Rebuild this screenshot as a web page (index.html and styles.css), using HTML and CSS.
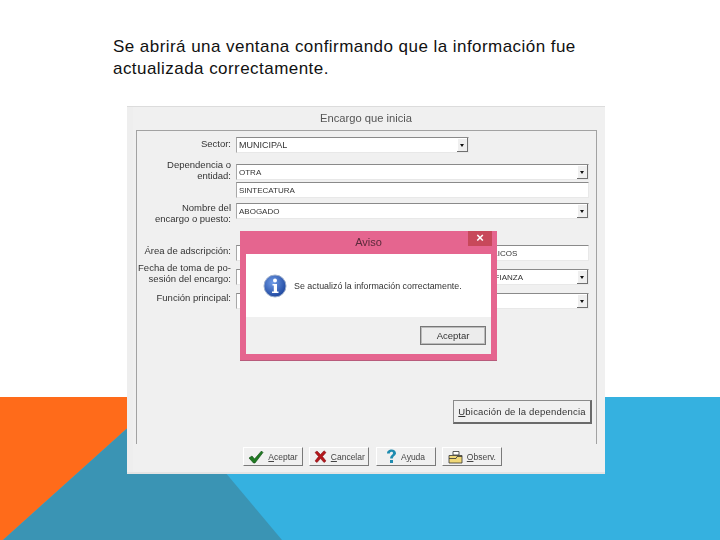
FILE: index.html
```html
<!DOCTYPE html>
<html lang="es">
<head>
<meta charset="utf-8">
<title>Encargo que inicia</title>
<link rel="stylesheet" href="styles.css">
</head>
<body>
<svg class="backdrop" viewBox="0 0 720 143" width="720" height="143" aria-hidden="true">
  <rect width="720" height="143" fill="#35b1e0"/>
  <polygon points="0,0 162,0 3,143 0,143" fill="#ff6b1a"/>
  <polygon points="162,0 282,143 3,143" fill="#3a94b4"/>
</svg>
<p class="intro">Se abrirá una ventana confirmando que la información fue actualizada correctamente.</p>
<div class="window">
  <div class="window-title">Encargo que inicia</div>
  <div class="panel">
    <div class="row row-sector">
      <div class="label label-single">Sector:</div>
      <div class="field field-short"><span class="value value-lg">MUNICIPAL</span><span class="arrow"></span></div>
    </div>
    <div class="row row-dep">
      <div class="label">Dependencia o<br>entidad:</div>
      <div class="stack">
        <div class="field field-thin"><span class="value">OTRA</span><span class="arrow"></span></div>
        <div class="field field-plain"><span class="value">SINTECATURA</span></div>
      </div>
    </div>
    <div class="row row-name">
      <div class="label label-name">Nombre del<br>encargo o puesto:</div>
      <div class="field"><span class="value">ABOGADO</span><span class="arrow"></span></div>
    </div>
    <div class="row row-area">
      <div class="label label-single label-area">Área de adscripción:</div>
      <div class="field field-plain"><span class="value value-area">DIRECCIÓN DE ASUNTOS PÚBLICOS</span></div>
    </div>
    <div class="row row-date">
      <div class="label label-date">Fecha de toma de po-<br>sesión del encargo:</div>
      <div class="field"><span class="value value-date">PERSONAL DE CONFIANZA</span><span class="arrow"></span></div>
    </div>
    <div class="row row-func">
      <div class="label label-single label-func">Función principal:</div>
      <div class="field"><span class="value"></span><span class="arrow"></span></div>
    </div>
    <div class="location-wrap"><button class="btn btn-location"><u>U</u>bicación de la dependencia</button></div>
  </div>
  <div class="actions">
    <button class="btn btn-action">
      <svg width="16" height="14" viewBox="0 0 16 14"><path d="M1 8 L4 6 L6.5 9 L13.5 1 L15 2.5 L7 13 L5.5 13 Z" fill="#1f7a22" stroke="#0f4a12" stroke-width=".6"/></svg>
      <span><u>A</u>ceptar</span>
    </button>
    <button class="btn btn-action">
      <svg width="13" height="13" viewBox="0 0 13 13"><path d="M1 2.5 L3 1 L6.5 4.5 L10 .8 L12 2.5 L8.5 6.5 L12 11 L10 12.5 L6.5 8.5 L3 12.5 L1 11 L4.5 6.5 Z" fill="#b3171c" stroke="#7c0d10" stroke-width=".5"/></svg>
      <span><u>C</u>ancelar</span>
    </button>
    <button class="btn btn-action">
      <svg width="11" height="15" viewBox="0 0 11 15"><path d="M1 4.5 C1 1.5 3.5 .5 5.5 .5 C8 .5 10 2 10 4.2 C10 6.3 7 7 6.8 9.5 L4.2 9.5 C4 6.5 7 6 7 4.3 C7 3 6.3 2.7 5.5 2.7 C4.5 2.7 3.8 3.4 3.8 4.5 Z" fill="#1f8cb0"/><rect x="4" y="11" width="3" height="3" fill="#1f8cb0"/></svg>
      <span>A<u>y</u>uda</span>
    </button>
    <button class="btn btn-action">
      <svg width="15" height="14" viewBox="0 0 15 14"><path d="M5 1.5 H11 V5 H5 Z" fill="#fff" stroke="#333" stroke-width=".8"/><path d="M1 5.5 H14 V13 H1 Z" fill="#f0d878" stroke="#333" stroke-width=".8"/><path d="M1 8.5 H8 L9 6.5 H14" fill="none" stroke="#333" stroke-width=".8"/></svg>
      <span><u>O</u>bserv.</span>
    </button>
  </div>
  <div class="dialog">
    <div class="dialog-title">Aviso<span class="dialog-close">×</span></div>
    <div class="dialog-body">
      <div class="dialog-message">
        <svg width="24" height="24" viewBox="0 0 24 24">
          <defs><radialGradient id="info" cx=".4" cy=".35" r=".75"><stop offset="0" stop-color="#6f9be6"/><stop offset="1" stop-color="#143c96"/></radialGradient></defs>
          <circle cx="12" cy="12" r="11" fill="url(#info)" stroke="#9fb0cc" stroke-width="1"/>
          <circle cx="12" cy="6.5" r="2" fill="#fff"/>
          <path d="M9.5 10 H14 V17.5 H15.5 V19 H9 V17.5 H10.8 V11.5 H9.5 Z" fill="#fff"/>
        </svg>
        <span>Se actualizó la información correctamente.</span>
      </div>
      <div class="dialog-footer"><button class="btn btn-ok">Aceptar</button></div>
    </div>
  </div>
</div>
</body>
</html>
```
FILE: styles.css
```css
html, body { margin: 0; padding: 0; }
body {
  position: relative;
  width: 720px;
  height: 540px;
  overflow: hidden;
  background: #fff;
  font-family: "Liberation Sans", Arial, sans-serif;
}
.backdrop { position: absolute; left: 0; top: 397px; display: block; }
.intro {
  position: relative;
  margin: 0 0 0 113px;
  padding-top: 36px;
  width: 480px;
  height: 106px;
  box-sizing: border-box;
  font-size: 17px;
  letter-spacing: .45px;
  line-height: 22px;
  color: #111;
}
.window {
  position: relative;
  box-sizing: border-box;
  margin-left: 127px;
  width: 478px;
  height: 368px;
  background: #f0f0f0;
  border-top: 1px solid #dcdcdc;
  border-bottom: 2px solid #e4e4e4;
  box-shadow: inset 6px 0 0 #eee;
  color: #333;
  font-size: 10px;
  filter: blur(.3px);
}
.window-title {
  height: 23px;
  line-height: 22px;
  text-align: center;
  font-size: 11.2px;
  color: #555;
}
.panel {
  box-sizing: border-box;
  margin: 0 8px 0 9px;
  height: 314px;
  border: 1px solid #a2a2a2;
  border-bottom: 0;
  padding: 6px 7px 0 0;
  display: flex;
  flex-direction: column;
}
.row {
  display: grid;
  grid-template-columns: 94px 1fr;
  column-gap: 5px;
  align-items: start;
}
.row-dep { margin-top: 6px; }
.row-name { margin-top: 5px; }
.row-area { margin-top: 21px; }
.row-date { margin-top: 8px; }
.row-func { margin-top: 8px; }
.label {
  text-align: right;
  font-size: 9.5px;
  line-height: 11px;
  color: #333;
  white-space: nowrap;
}
.label-single { line-height: 14px; }
.label-name { margin-top: -1px; }
.label-area { margin-top: -1px; }
.label-date { margin-top: -7px; }
.label-func { margin-top: -2px; }
.stack { display: flex; flex-direction: column; gap: 2px; padding-top: 5px; }
.field {
  box-sizing: border-box;
  height: 16px;
  display: flex;
  align-items: center;
  background: #fff;
  border-top: 1px solid #8a8a8a;
  border-left: 1px solid #a8a8a8;
  border-bottom: 1px solid #e8e8e8;
  border-right: 1px solid #e8e8e8;
  overflow: hidden;
}
.field-short { width: 233px; }
.value {
  flex: 1;
  padding-left: 2px;
  font-size: 8px;
  color: #333;
  white-space: nowrap;
}
.value-lg { font-size: 9px; }
.value-area { padding-left: 139px; }
.value-date { padding-left: 181px; }
.arrow {
  position: relative;
  flex: none;
  width: 11px;
  height: 14px;
  background: #efefef;
  box-shadow: inset -1px -1px 0 #707070, inset 1px 1px 0 #fff;
}
.arrow::after {
  content: "";
  position: absolute;
  left: 3px;
  top: 6px;
  border-left: 2.5px solid transparent;
  border-right: 2.5px solid transparent;
  border-top: 3px solid #111;
}
.location-wrap { margin: 91px -3px 0 0; display: flex; justify-content: flex-end; }
.btn {
  font-family: inherit;
  color: #333;
  background: #f0f0f0;
  padding: 0;
  cursor: default;
}
.btn-location {
  width: 139px;
  height: 24px;
  font-size: 9.5px;
  letter-spacing: .2px;
  border: 1px solid #fff;
  border-right: 2px solid #6a6a6a;
  border-bottom: 2px solid #6a6a6a;
  border-top-color: #8a8a8a;
  border-left-color: #8a8a8a;
}
.actions {
  display: flex;
  gap: 6.3px;
  padding: 3px 0 0 116px;
}
.btn-action {
  display: flex;
  align-items: center;
  justify-content: center;
  gap: 4px;
  width: 60px;
  height: 19px;
  font-size: 8.5px;
  border: 1px solid #fff;
  border-right: 1px solid #7a7a7a;
  border-bottom: 1px solid #7a7a7a;
  color: #444;
}
.dialog {
  position: absolute;
  left: 113px;
  top: 124px;
  box-sizing: border-box;
  width: 257px;
  height: 129px;
  background: #e5658f;
  box-shadow: 0 1px 0 #b85b7b;
  padding: 0 6px 6px;
  display: flex;
  flex-direction: column;
}
.dialog-title {
  position: relative;
  flex: none;
  height: 23px;
  line-height: 23px;
  text-align: center;
  font-size: 11px;
  color: #5b2a3b;
}
.dialog-close {
  position: absolute;
  right: -1px;
  top: 0;
  width: 24px;
  height: 15px;
  line-height: 14px;
  background: #c8485a;
  color: #fff;
  font-size: 13px;
  font-weight: bold;
}
.dialog-body { flex: 1; display: flex; flex-direction: column; background: #fff; }
.dialog-message {
  flex: none;
  height: 63px;
  box-sizing: border-box;
  padding: 0 0 0 17px;
  display: flex;
  align-items: center;
  gap: 7px;
  font-size: 8.9px;
  color: #333;
}
.dialog-footer {
  flex: 1;
  background: #f0f0f0;
  display: flex;
  justify-content: flex-end;
  align-items: flex-start;
  padding: 9px 5px 0 0;
}
.btn-ok {
  width: 66px;
  height: 19px;
  font-size: 9.5px;
  border: 1px solid #777;
  outline: 1px solid #bbb;
  outline-offset: -2px;
  background: #ececec;
}
```
